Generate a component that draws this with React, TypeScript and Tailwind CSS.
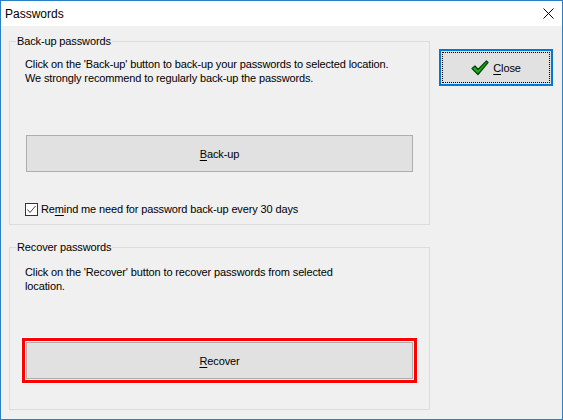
import React from 'react';

const font = { fontFamily: '"Liberation Sans", Arial, sans-serif' };

function CheckIcon() {
  return (
    <svg width="18" height="16" viewBox="0 0 18 16" className="mr-[4px]">
      <path
        d="M1 8.5 L4 6 L7 9.5 L15.5 1 L17 2.5 L7 14.5 Z"
        fill="#14b414"
        stroke="#0a3d0a"
        strokeWidth="1.2"
        strokeLinejoin="round"
      />
    </svg>
  );
}

function Mnemonic({ text, index }: { text: string; index: number }) {
  return (
    <>
      {text.slice(0, index)}
      <span className="underline underline-offset-[2px]">{text[index]}</span>
      {text.slice(index + 1)}
    </>
  );
}

function WinButton({ children }: { children: React.ReactNode }) {
  return (
    <button className="flex h-[37px] w-[387px] items-center justify-center border border-[#adadad] bg-[#e1e1e1] text-[11px] tracking-[-0.13px] text-black">
      {children}
    </button>
  );
}

export default function App() {
  return (
    <div
      className="flex h-[420px] w-[563px] flex-col border border-[#2b7fc4] bg-[#f0f0f0] text-[11px] leading-[14px] text-black"
      style={font}
    >
      <div className="flex h-[25px] items-center justify-between bg-white pl-[4px] pr-[8px]">
        <span className="text-[12px]">Passwords</span>
        <svg width="11" height="11" viewBox="0 0 11 11">
          <path d="M0.5 0.5 L10.5 10.5 M10.5 0.5 L0.5 10.5" stroke="#000" strokeWidth="1" />
        </svg>
      </div>

      <div className="flex gap-[9px] pl-[8px] pt-[8px] tracking-[-0.13px]">
        <div className="flex w-[421px] flex-col">
          <fieldset className="border border-[#dcdcdc] pb-[8px] pl-[6px]">
            <legend className="px-[1px]">Back-up passwords</legend>
            <div className="ml-[9px] mt-[9px]">
              <p>Click on the 'Back-up' button to back-up your passwords to selected location.</p>
              <p>We strongly recommend to regularly back-up the passwords.</p>
            </div>
            <div className="ml-[10px] mt-[50px]">
              <WinButton>
                <Mnemonic text="Back-up" index={0} />
              </WinButton>
            </div>
            <label className="ml-[9px] mt-[30px] flex items-center gap-[3px]">
              <span className="flex h-[13px] w-[13px] items-center justify-center border border-[#333] bg-white">
                <svg width="11" height="11" viewBox="0 0 11 11">
                  <path d="M1.5 5.5 L4 8.5 L9.5 2" fill="none" stroke="#444" strokeWidth="1" />
                </svg>
              </span>
              <span>
                <Mnemonic text="Remind me need for password back-up every 30 days" index={2} />
              </span>
            </label>
          </fieldset>

          <fieldset className="mt-[15px] border border-[#dcdcdc] pb-[30px] pl-[6px]">
            <legend className="px-[1px]">Recover passwords</legend>
            <div className="ml-[9px] mt-[11px] w-[330px]">
              <p>Click on the 'Recover' button to recover passwords from selected location.</p>
            </div>
            <div className="relative ml-[10px] mt-[49px] w-[387px]">
              <WinButton>
                <Mnemonic text="Recover" index={0} />
              </WinButton>
              <span className="pointer-events-none absolute -inset-[4px] border-[3px] border-[#ff0000] shadow-[0_0_0_1px_#ffffff]" />
            </div>
          </fieldset>
        </div>

        <div className="pt-[15px]">
          <button className="flex h-[37px] w-[114px] items-center justify-center border-2 border-[#0078d7] bg-[#e1e1e1] p-[1px] text-[11px]">
            <span className="flex h-full w-full items-center justify-center border border-dotted border-black">
              <CheckIcon />
              <Mnemonic text="Close" index={0} />
            </span>
          </button>
        </div>
      </div>
    </div>
  );
}
